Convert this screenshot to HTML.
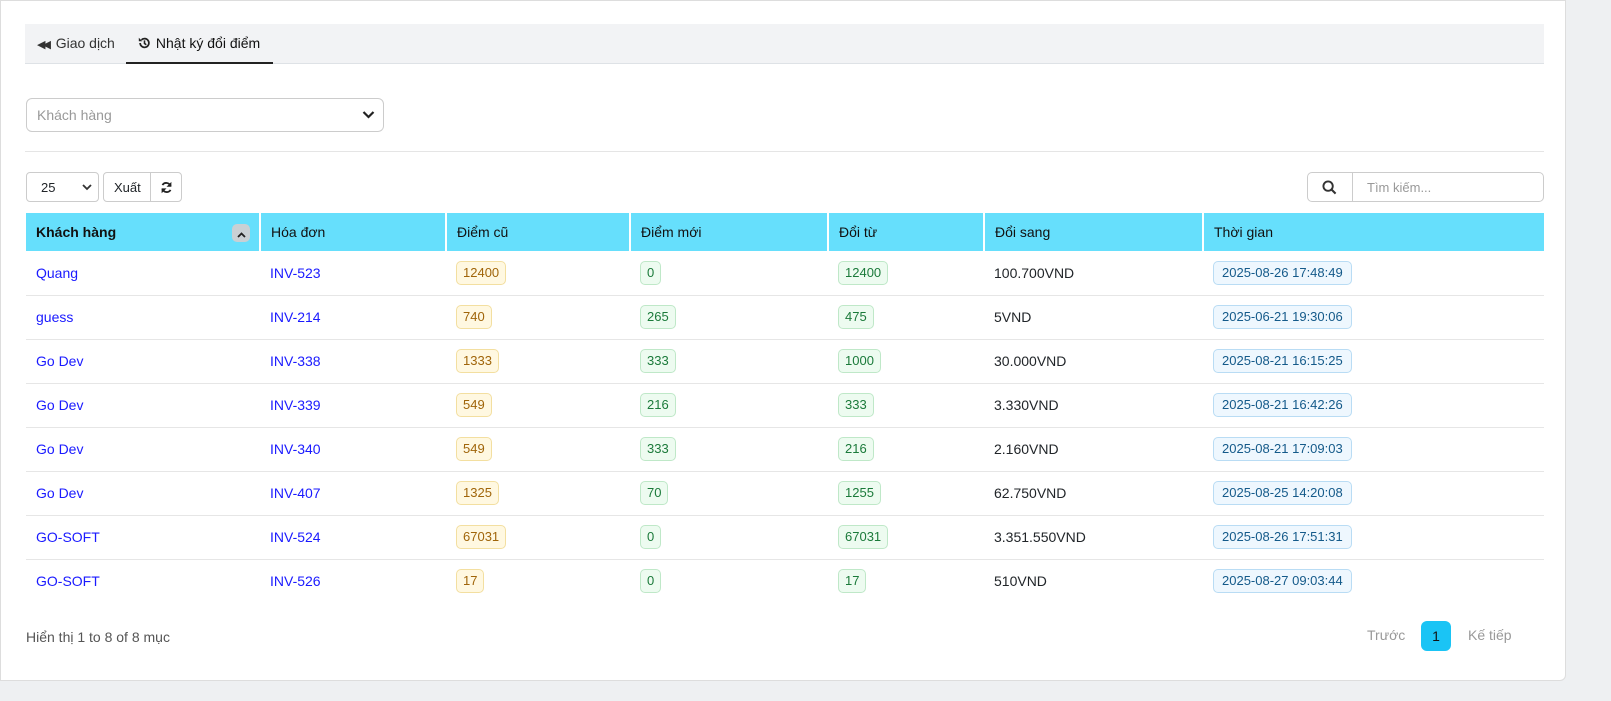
<!DOCTYPE html>
<html><head><meta charset="utf-8"><style>
*{box-sizing:border-box;margin:0;padding:0}
body{width:1611px;height:701px;background:#eef0f2;font-family:"Liberation Sans",sans-serif;font-size:14px;color:#212529;position:relative;overflow:hidden}
.card{position:absolute;left:0;top:0;width:1566px;height:681px;background:#fff;border:1px solid #ddd;border-radius:0 0 6px 0}
.tabs{position:absolute;left:24px;top:23px;width:1519px;height:40px;background:#f2f3f5;border-bottom:1px solid #dee2e6}
.tab{position:absolute;top:0;height:40px;line-height:38px;font-size:14px;color:#333}
.tab.act{border-bottom:2px solid #222;color:#111}
.sel{position:absolute;left:25px;top:97px;width:358px;height:34px;border:1px solid #ccc;border-radius:6px;color:#999;padding:8px 10px;font-size:14px}
.hr{position:absolute;left:24px;top:150px;width:1519px;border-top:1px solid #e5e5e5}
.box{position:absolute;border:1px solid #ccc;border-radius:4px;height:30px;font-size:13px}
table{position:absolute;left:25px;top:212px;width:1518px;border-collapse:collapse}
th{background:#66dffc;height:38px;text-align:left;padding-left:10px;font-size:14px;font-weight:normal;border-right:2px solid #fff;color:#111}
th:last-child{border-right:0}
td{height:44px;padding-left:10px;border-bottom:1px solid #e6e6e6;font-size:14px}
tr:last-child td{border-bottom:0}
a{color:#1a1aff;text-decoration:none}
.b{display:inline-block;padding:3px 6px;border-radius:5px;font-size:13px;line-height:16px}
.y{background:#fff8e1;border:1px solid #f3dfa0;color:#a0650a}
.g{background:#edfbf0;border:1px solid #bfe8c8;color:#1b7a3a}
.t{background:#eef7fe;border:1px solid #b9dcf4;color:#145a8a;padding:3px 8px}
</style></head><body>
<div class="card">
<div class="tabs">
<div class="tab" style="left:12px"><span style="font-size:11px;letter-spacing:-3px">◀◀</span>&nbsp; Giao dịch</div>
<div class="tab act" style="left:101px;width:147px;padding-left:11px">
<svg width="15" height="14" viewBox="0 0 16 16" style="vertical-align:-2px"><path d="M3 8a5 5 0 1 0 1.5-3.6" fill="none" stroke="#222" stroke-width="2"/><path d="M1.5 2v4h4z" fill="#222"/><path d="M8 5v3.5l2 1.5" fill="none" stroke="#222" stroke-width="1.8"/></svg> Nhật ký đổi điểm</div>
</div>
<div class="sel">Khách hàng<svg style="position:absolute;right:8px;top:11px" width="13" height="10" viewBox="0 0 13 10"><path d="M1.5 2l5 5 5-5" fill="none" stroke="#222" stroke-width="2.2"/></svg></div>
<div class="hr"></div>
<div class="box" style="left:25px;top:171px;width:73px;padding:7px 14px">25<svg style="position:absolute;right:6px;top:11px" width="10" height="7" viewBox="0 0 10 7"><path d="M1 1l4 4 4-4" fill="none" stroke="#333" stroke-width="1.8"/></svg></div>
<div class="box" style="left:102px;top:171px;width:79px"><span style="position:absolute;left:10px;top:7px">Xuất</span><span style="position:absolute;left:46px;top:0;height:28px;border-left:1px solid #ccc"></span><svg style="position:absolute;left:56px;top:8px" width="13" height="13" viewBox="0 0 16 16"><path d="M13 6.5A5.5 5.5 0 0 0 3 5" fill="none" stroke="#222" stroke-width="2.2"/><path d="M14 1v6h-6z" fill="#222"/><path d="M3 9.5A5.5 5.5 0 0 0 13 11" fill="none" stroke="#222" stroke-width="2.2"/><path d="M2 15v-6h6z" fill="#222"/></svg></div>
<div class="box" style="left:1306px;top:171px;width:237px;border-radius:5px"><svg style="position:absolute;left:14px;top:7px" width="15" height="15" viewBox="0 0 16 16"><circle cx="6.5" cy="6.5" r="5" fill="none" stroke="#333" stroke-width="2"/><path d="M10 10l4.5 4.5" stroke="#333" stroke-width="2.2"/></svg><span style="position:absolute;left:44px;top:0;height:28px;border-left:1px solid #ccc"></span><span style="position:absolute;left:59px;top:7px;color:#999">Tìm kiếm...</span></div>
<table>
<tr><th style="width:234px;position:relative;font-weight:bold">Khách hàng<span style="position:absolute;right:9px;top:11px;width:18px;height:18px;background:#c9d0d4;border-radius:5px;text-align:center;line-height:18px"><svg width="9" height="6" viewBox="0 0 9 6"><path d="M1 5l3.5-3.5L8 5" fill="none" stroke="#222" stroke-width="1.8"/></svg></span></th><th style="width:186px">Hóa đơn</th><th style="width:184px">Điểm cũ</th><th style="width:198px">Điểm mới</th><th style="width:156px">Đổi từ</th><th style="width:219px">Đổi sang</th><th>Thời gian</th></tr>
<tr><td><a>Quang</a></td><td><a>INV-523</a></td><td><span class="b y">12400</span></td><td><span class="b g">0</span></td><td><span class="b g">12400</span></td><td>100.700VND</td><td><span class="b t">2025-08-26 17:48:49</span></td></tr>
<tr><td><a>guess</a></td><td><a>INV-214</a></td><td><span class="b y">740</span></td><td><span class="b g">265</span></td><td><span class="b g">475</span></td><td>5VND</td><td><span class="b t">2025-06-21 19:30:06</span></td></tr>
<tr><td><a>Go Dev</a></td><td><a>INV-338</a></td><td><span class="b y">1333</span></td><td><span class="b g">333</span></td><td><span class="b g">1000</span></td><td>30.000VND</td><td><span class="b t">2025-08-21 16:15:25</span></td></tr>
<tr><td><a>Go Dev</a></td><td><a>INV-339</a></td><td><span class="b y">549</span></td><td><span class="b g">216</span></td><td><span class="b g">333</span></td><td>3.330VND</td><td><span class="b t">2025-08-21 16:42:26</span></td></tr>
<tr><td><a>Go Dev</a></td><td><a>INV-340</a></td><td><span class="b y">549</span></td><td><span class="b g">333</span></td><td><span class="b g">216</span></td><td>2.160VND</td><td><span class="b t">2025-08-21 17:09:03</span></td></tr>
<tr><td><a>Go Dev</a></td><td><a>INV-407</a></td><td><span class="b y">1325</span></td><td><span class="b g">70</span></td><td><span class="b g">1255</span></td><td>62.750VND</td><td><span class="b t">2025-08-25 14:20:08</span></td></tr>
<tr><td><a>GO-SOFT</a></td><td><a>INV-524</a></td><td><span class="b y">67031</span></td><td><span class="b g">0</span></td><td><span class="b g">67031</span></td><td>3.351.550VND</td><td><span class="b t">2025-08-26 17:51:31</span></td></tr>
<tr><td><a>GO-SOFT</a></td><td><a>INV-526</a></td><td><span class="b y">17</span></td><td><span class="b g">0</span></td><td><span class="b g">17</span></td><td>510VND</td><td><span class="b t">2025-08-27 09:03:44</span></td></tr>
</table>
<div style="position:absolute;left:25px;top:628px;color:#555;font-size:14px">Hiển thị 1 to 8 of 8 mục</div>
<div style="position:absolute;left:1366px;top:626px;color:#999;font-size:14px">Trước</div>
<div style="position:absolute;left:1420px;top:620px;width:30px;height:30px;background:#1ac4f5;border-radius:6px;text-align:center;line-height:30px;color:#111">1</div>
<div style="position:absolute;left:1467px;top:626px;color:#999;font-size:14px">Kế tiếp</div>
</div>
</body></html>
